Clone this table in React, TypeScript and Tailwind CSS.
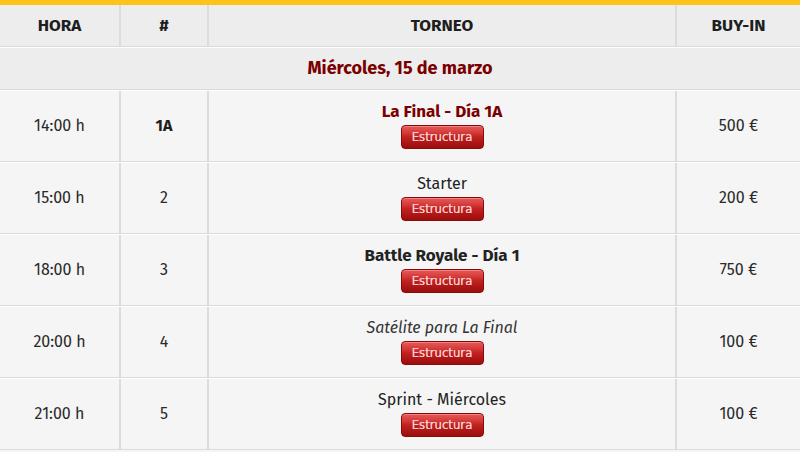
const rows = [
  { time: '14:00 h', num: '1A', numBold: true, name: 'La Final - Día 1A', style: 'font-bold text-[17px] text-[#7a0000]', buy: '500 €' },
  { time: '15:00 h', num: '2', numBold: false, name: 'Starter', style: 'text-[#222]', buy: '200 €' },
  { time: '18:00 h', num: '3', numBold: false, name: 'Battle Royale - Día 1', style: 'font-bold text-[17px] text-[#222]', buy: '750 €' },
  { time: '20:00 h', num: '4', numBold: false, name: 'Satélite para La Final', style: 'italic text-[#333]', buy: '100 €' },
  { time: '21:00 h', num: '5', numBold: false, name: 'Sprint - Miércoles', style: 'text-[#222]', buy: '100 €' },
];

const EstructuraButton = () => (
  <button
    type="button"
    className="w-[83px] h-[24px] rounded-[4px] border border-[#8a0a0a] bg-gradient-to-b from-[#e85a5a] via-[#c42020] to-[#9a0c0c] text-[#f7cccc] text-[13px] leading-none shadow-[inset_0_1px_0_rgba(255,255,255,0.25)] [text-shadow:0_0_0.4px_#f7cccc]"
    style={{ fontFamily: '"DejaVu Sans Condensed", "Liberation Sans Narrow", "Liberation Sans", sans-serif', fontStretch: 'condensed' }}
  >
    Estructura
  </button>
);

export default function App() {
  return (
    <div
      className="w-[800px] h-[452px] bg-[#f5f5f5] text-[16px] text-[#222] overflow-hidden"
      style={{ fontFamily: '"Fira Sans", "Open Sans", "Noto Sans", sans-serif' }}
    >
      <div className="h-[5px] bg-[#fcc419]" />
      {/* header */}
      <div className="flex h-[42px] bg-[#ededed] border-b border-[#dadada] font-bold text-[17px] text-[#1e1e1e]">
        <div className="w-[121px] shrink-0 border-r-2 border-[#dcdcdc] flex items-center justify-center">HORA</div>
        <div className="w-[88px] shrink-0 border-r-2 border-[#dcdcdc] flex items-center justify-center">#</div>
        <div className="w-[468px] shrink-0 border-r-2 border-[#dcdcdc] flex items-center justify-center">TORNEO</div>
        <div className="flex-1 flex items-center justify-center">BUY-IN</div>
      </div>
      {/* date row */}
      <div className="h-[43px] bg-[#ededed] border-t border-white border-b border-b-[#dadada] flex items-center justify-center font-bold text-[18px] text-[#7a0000]">
        Miércoles, 15 de marzo
      </div>
      {rows.map((r) => (
        <div key={r.time} className="flex h-[72px] border-t border-white border-b border-b-[#dcdcdc] text-[#2a2a2a]">
          <div className="w-[121px] shrink-0 border-r-2 border-[#dcdcdc] flex items-center justify-center">{r.time}</div>
          <div className={`w-[88px] shrink-0 border-r-2 border-[#dcdcdc] flex items-center justify-center ${r.numBold ? 'font-bold text-[#1e1e1e]' : ''}`}>
            {r.num}
          </div>
          <div className="w-[468px] shrink-0 border-r-2 border-[#dcdcdc] flex flex-col items-center justify-center gap-[3px] pb-[2px]">
            <span className={`leading-[20px] ${r.style}`}>{r.name}</span>
            <EstructuraButton />
          </div>
          <div className="flex-1 flex items-center justify-center">{r.buy}</div>
        </div>
      ))}
    </div>
  );
}
